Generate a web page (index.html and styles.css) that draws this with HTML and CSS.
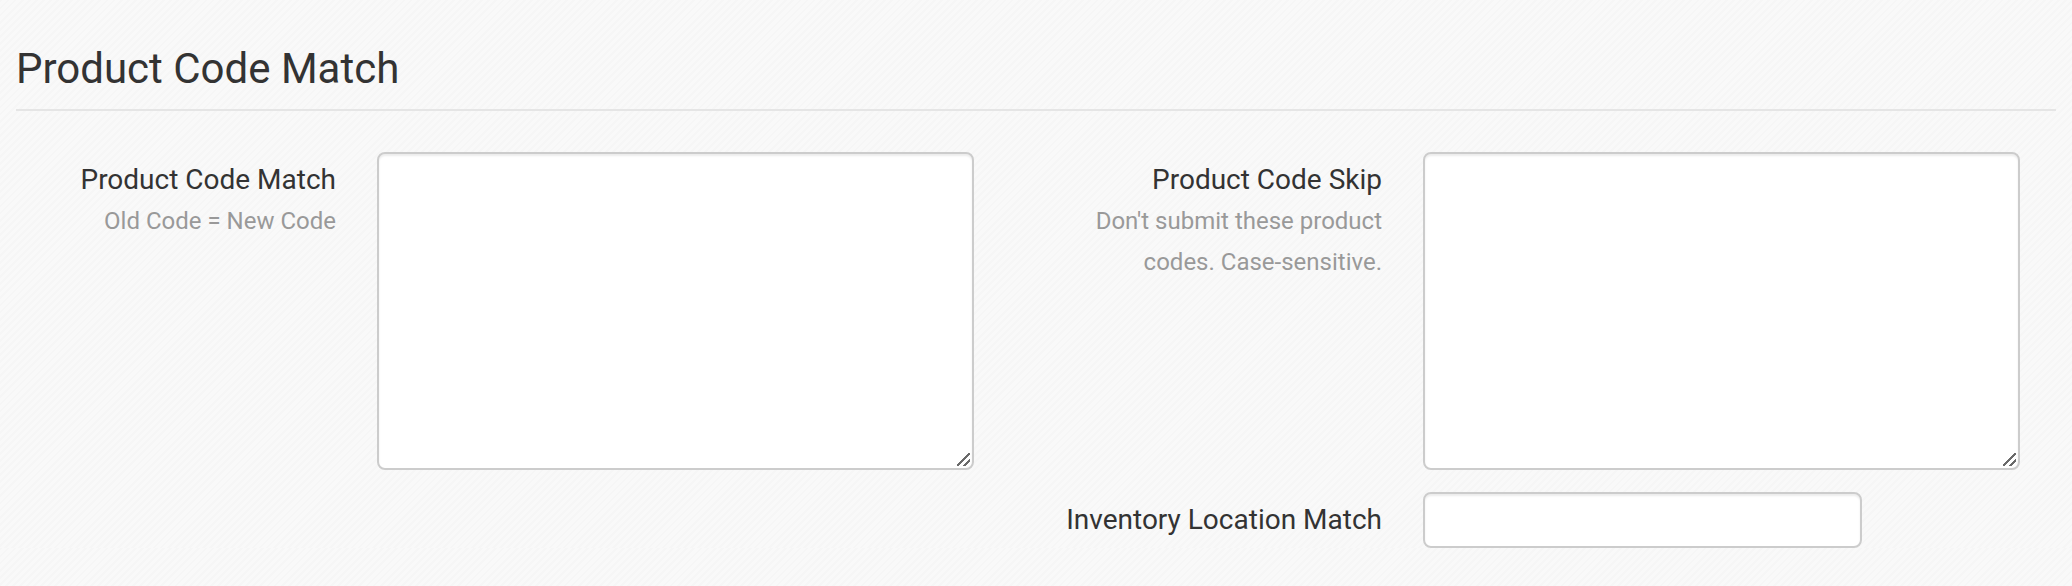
FILE: index.html
```html
<!DOCTYPE html>
<html lang="en">
<head>
    <meta charset="UTF-8">
    <meta name="viewport" content="width=device-width, initial-scale=1.0">
    <title>Product Code Match</title>
    <link rel="stylesheet" href="styles.css">
</head>
<body>
    <div class="page">
        <form class="settings-form">
            <fieldset>
                <legend>Product Code Match</legend>

                <div class="fields">
                    <div class="form-group">
                        <div class="control-label">
                            <label for="code_match">Product Code Match</label>
                            <span class="help">Old Code = New Code</span>
                        </div>
                        <div class="textarea-wrap">
                            <textarea id="code_match" name="code_match" class="form-control"></textarea>
                        </div>
                    </div>

                    <div class="form-group">
                        <div class="control-label">
                            <label for="code_skip">Product Code Skip</label>
                            <span class="help">Don't submit these product codes. Case-sensitive.</span>
                        </div>
                        <div class="textarea-wrap">
                            <textarea id="code_skip" name="code_skip" class="form-control"></textarea>
                        </div>
                    </div>

                    <div class="form-group form-group-right">
                        <div class="control-label">
                            <label for="location_match">Inventory Location Match</label>
                        </div>
                        <input type="text" id="location_match" name="location_match" class="form-control form-control-short">
                    </div>
                </div>
            </fieldset>
        </form>
    </div>
</body>
</html>
```

FILE: styles.css
```css
/* page */
body {
    font-family: Roboto, "Liberation Sans", Arial, sans-serif;
    color: #333;
    margin: 0;
    padding: 0;
    background-color: #f9f9f9;
    background-image: repeating-linear-gradient(135deg, rgba(0, 0, 0, 0.01) 0, rgba(0, 0, 0, 0.01) 2px, transparent 2px, transparent 5px);
}
.page {
    padding: 44px 16px 0;
}
fieldset {
    border: 0;
    margin: 0;
    padding: 0;
    min-width: 0;
}
legend {
    display: block;
    width: 100%;
    padding: 0 0 15px;
    margin: 0 0 41px;
    font-size: 42px;
    line-height: 50px;
    font-weight: 400;
    color: #333;
    border-bottom: 2px solid #e5e5e5;
}

/* two column form */
.fields {
    display: grid;
    grid-template-columns: 958px 958px;
    column-gap: 88px;
    row-gap: 22px;
}
.form-group {
    display: grid;
    grid-template-columns: 320px 1fr;
    column-gap: 41px;
    align-items: start;
}
.form-group-right {
    grid-column: 2;
}
.control-label {
    text-align: right;
    padding-top: 7px;
}
.control-label label {
    display: block;
    font-size: 28px;
    line-height: 42px;
    color: #333;
}
.help {
    display: block;
    font-size: 24px;
    line-height: 41px;
    color: #999;
}
.form-control {
    display: block;
    box-sizing: border-box;
    width: 100%;
    border: 2px solid #ccc;
    border-radius: 8px;
    background-color: #fff;
    box-shadow: inset 0 2px 2px rgba(0, 0, 0, 0.075);
    font-family: inherit;
    font-size: 28px;
    color: #555;
    padding: 12px 24px;
    margin: 0;
}
.textarea-wrap {
    position: relative;
}
textarea.form-control {
    height: 318px;
    resize: none;
}
/* resize grip drawn over the corner */
.textarea-wrap::after {
    content: "";
    position: absolute;
    right: 4px;
    bottom: 4px;
    width: 13px;
    height: 13px;
    background: linear-gradient(135deg, transparent 0, transparent 46%, #6a6a6a 46%, #6a6a6a 56%, transparent 56%, transparent 72%, #6a6a6a 72%, #6a6a6a 82%, transparent 82%);
    pointer-events: none;
}
.form-control-short {
    width: 439px;
    height: 56px;
}
```
